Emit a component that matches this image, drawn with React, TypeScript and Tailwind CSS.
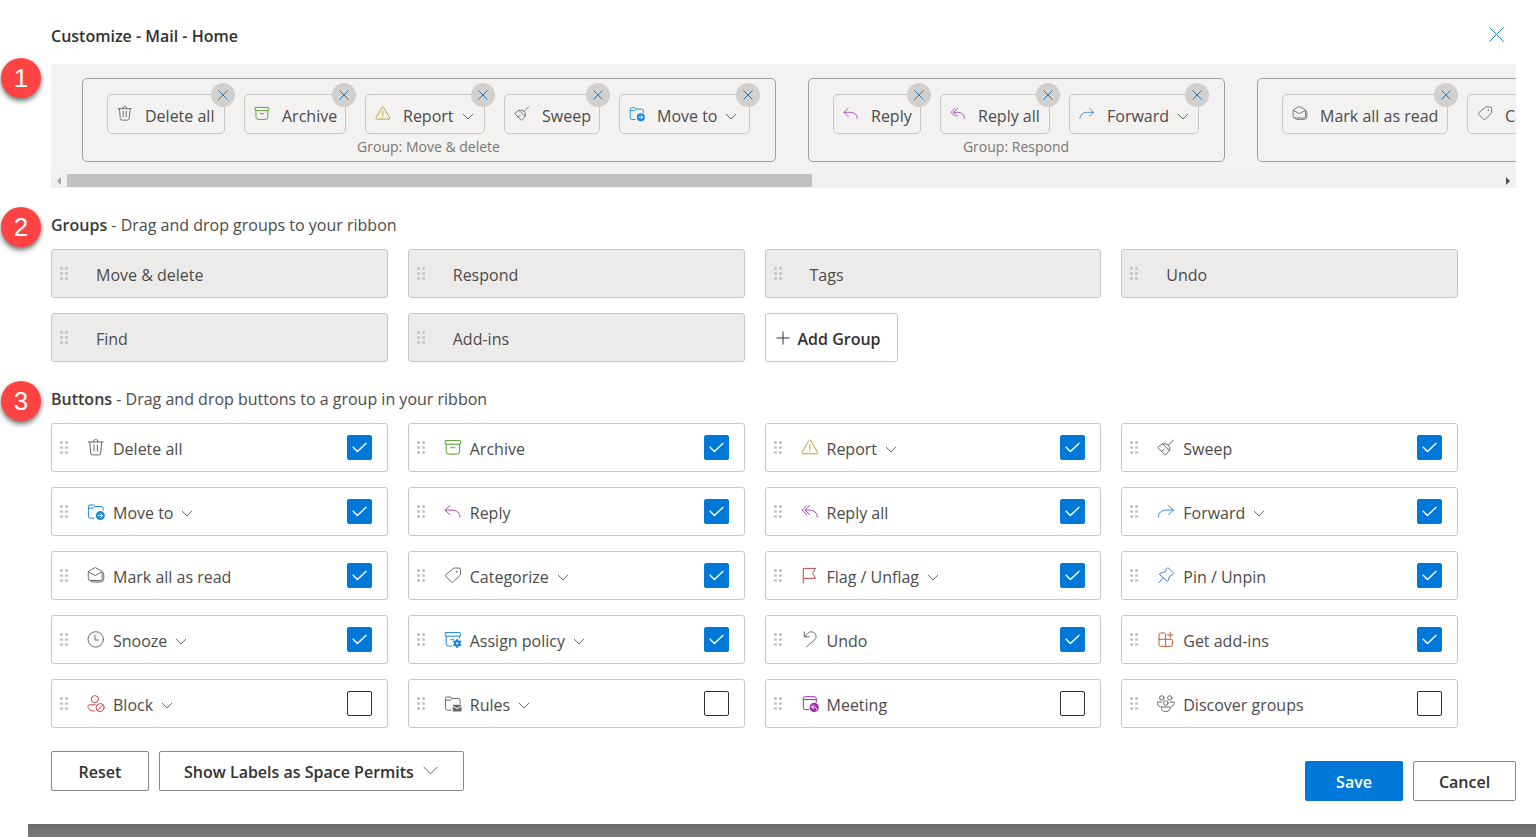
import type { ReactNode } from 'react';

/**
 * Ribbon customization dialog
 *
 * Top strip previews the ribbon, below it are the draggable groups and buttons.
 */

type Action = {
  id: string;
  label: string;
  color: string;
  icon: ReactNode;
  menu?: boolean;
  checked?: boolean;
  chip?: string;
};

const ACTIONS: Action[] = [
  {
    id: 'delete-all',
    label: 'Delete all',
    color: 'text-[#6b6966]',
    checked: true,
    chip: 'w-[118px]',
    icon: (
      <path d="M1.2 3h15M6.2 3a2.5 2.5 0 0 1 5 0M2.7 3l1 11a2 2 0 0 0 2 1.9h6a2 2 0 0 0 2-1.9l1-11M7 6v6M10.4 6v6" />
    ),
  },
  {
    id: 'archive',
    label: 'Archive',
    color: 'text-[#559a2c]',
    checked: true,
    chip: 'w-[102px]',
    icon: (
      <>
        <rect x="1.2" y="1.6" width="15.4" height="3.6" rx="0.8" />
        <path d="M2.2 5.2v7.4a2.5 2.5 0 0 0 2.5 2.5h8.4a2.5 2.5 0 0 0 2.5-2.5V5.2M6.9 8.7h4" />
      </>
    ),
  },
  {
    id: 'report',
    label: 'Report',
    color: 'text-[#c09a2c]',
    menu: true,
    checked: true,
    chip: 'w-[120px]',
    icon: (
      <>
        <path d="M8 1.5a1 1 0 0 1 1.7 0l6.8 11.8a1 1 0 0 1-.8 1.5H2a1 1 0 0 1-.9-1.5zM8.8 5.5v4.7" />
        <circle cx="8.8" cy="12.2" r="0.7" fill="currentColor" stroke="none" />
      </>
    ),
  },
  {
    id: 'sweep',
    label: 'Sweep',
    color: 'text-[#6b6966]',
    checked: true,
    chip: 'w-[96px]',
    icon: (
      <path d="M16.4 1l-5 5.2M5.6 4.9c2.3-.6 4.3 0 5.8 1.3 1.3 1.5 1.8 3.3 1.2 5.4L8.4 16.2 1 8.8zM5.6 4.9l7 6.7M4.6 12.2l2.4-1.6" />
    ),
  },
  {
    id: 'move-to',
    label: 'Move to',
    color: 'text-[#1a86d9]',
    menu: true,
    checked: true,
    chip: 'w-[131px]',
    icon: (
      <>
        <path d="M7 15.2H3.4a2 2 0 0 1-2-2V3.4a1.4 1.4 0 0 1 1.4-1.4h3.7l2 1.5h5.7a2 2 0 0 1 2 2v1.8M1.4 5.2h4.9l2.2-1.7" />
        <circle cx="13.3" cy="12.6" r="4.5" fill="currentColor" stroke="none" />
        <path d="M11 12.6h4.5M13.6 10.6l2 2-2 2" stroke="#fff" />
      </>
    ),
  },
  {
    id: 'reply',
    label: 'Reply',
    color: 'text-[#a846b9]',
    checked: true,
    chip: 'w-[88px]',
    icon: <path d="M5.7 2.6L1.2 7.1l4.5 4.5M1.2 7.1h6.5c5 0 8.3 2.6 8.3 7" />,
  },
  {
    id: 'reply-all',
    label: 'Reply all',
    color: 'text-[#a846b9]',
    checked: true,
    chip: 'w-[110px]',
    icon: <path d="M5.6 2.6L1.1 7.1l4.5 4.5M8.6 2.6L4.1 7.1l4.5 4.5M4.1 7.1h4.3c4.8 0 7.8 2.6 7.9 7" />,
  },
  {
    id: 'forward',
    label: 'Forward',
    color: 'text-[#2b88d8]',
    menu: true,
    checked: true,
    chip: 'w-[130px]',
    icon: <path d="M11.8 2.6l4.5 4.5-4.5 4.5M16.3 7.1H9.6c-5 0-8.4 2.6-8.5 7" />,
  },
  {
    id: 'mark-read',
    label: 'Mark all as read',
    color: 'text-[#6b6966]',
    checked: true,
    chip: 'w-[166px]',
    icon: (
      <>
        <path d="M1.3 5.2a1.5 1.5 0 0 1 .8-1.3L7.5.9a1.5 1.5 0 0 1 1.5 0l5.4 3a1.5 1.5 0 0 1 .8 1.3v6.4a1.9 1.9 0 0 1-1.9 1.9H3.2a1.9 1.9 0 0 1-1.9-1.9zM1.5 4.9l6.8 3.6 6.7-3.6" />
        <path d="M3.2 13.6a2.3 2.3 0 0 0 2 1.4h8a3.6 3.6 0 0 0 3.6-3.6V7.2a2.3 2.3 0 0 0-1.4-2" />
      </>
    ),
  },
  {
    id: 'categorize',
    label: 'Categorize',
    color: 'text-[#6b6966]',
    menu: true,
    checked: true,
    chip: 'w-[152px]',
    icon: (
      <>
        <path d="M9.3 1.5a1.5 1.5 0 0 1 1.1-.5l4.6.1a1.5 1.5 0 0 1 1.5 1.5v4.6a1.5 1.5 0 0 1-.5 1.1l-6.6 6.5a1.5 1.5 0 0 1-2.1 0L2 9.6a1.5 1.5 0 0 1 0-2.1z" />
        <circle cx="12.7" cy="4.6" r="0.9" fill="currentColor" stroke="none" />
      </>
    ),
  },
  {
    id: 'flag',
    label: 'Flag / Unflag',
    color: 'text-[#c4474f]',
    menu: true,
    checked: true,
    icon: <path d="M2.3 15.9V1.4h12.2l-2.8 5 2.8 5H2.3" />,
  },
  {
    id: 'pin',
    label: 'Pin / Unpin',
    color: 'text-[#2b88d8]',
    checked: true,
    icon: (
      <path d="M10 1.3a1 1 0 0 1 1.6-.2l4.6 4.6a1 1 0 0 1-.2 1.6l-3.3 1.9-1.5 4.2a.9.9 0 0 1-1.5.3L2.9 7.9a.9.9 0 0 1 .3-1.5l4.6-1.6zM6.2 11.1l-4.5 4.6" />
    ),
  },
  {
    id: 'snooze',
    label: 'Snooze',
    color: 'text-[#6b6966]',
    menu: true,
    checked: true,
    icon: (
      <>
        <circle cx="8.7" cy="8.4" r="7.7" />
        <path d="M8 4.2V9h3.6" />
      </>
    ),
  },
  {
    id: 'policy',
    label: 'Assign policy',
    color: 'text-[#1a86d9]',
    menu: true,
    checked: true,
    icon: (
      <>
        <rect x="1.2" y="1.6" width="15.4" height="3.6" rx="0.8" />
        <path d="M2.2 5.2v7.4a2.5 2.5 0 0 0 2.5 2.5h2.8M15.6 5.2v2M6.9 8.7h3" />
        <circle cx="13.2" cy="12.4" r="2.2" strokeWidth="2.2" />
        <path
          d="M13.2 8.6v1M13.2 15.2v1M9.9 10.5l.9.5M15.6 13.8l.9.5M9.9 14.3l.9-.5M15.6 11l.9-.5"
          strokeWidth="1.8"
        />
      </>
    ),
  },
  {
    id: 'undo',
    label: 'Undo',
    color: 'text-[#6b6966]',
    checked: true,
    icon: <path d="M3.3.9v4.9h5M3.5 5.6l3.2-3.2a4.7 4.7 0 0 1 7.7.8c1.2 2 .8 4.1-.8 5.6l-7.9 7" />,
  },
  {
    id: 'addins',
    label: 'Get add-ins',
    color: 'text-[#ca5a2e]',
    checked: true,
    icon: (
      <path d="M8.6 8.3V3.4a1.4 1.4 0 0 0-1.4-1.4H3.4A1.4 1.4 0 0 0 2 3.4v10.3a1.6 1.6 0 0 0 1.6 1.6h10.2a1.6 1.6 0 0 0 1.6-1.6V9.7A1.4 1.4 0 0 0 14 8.3H2M8.6 8.3v7M13.2 1.2v5.6M10.4 4H16" />
    ),
  },
  {
    id: 'block',
    label: 'Block',
    color: 'text-[#c4474f]',
    menu: true,
    icon: (
      <>
        <circle cx="7.9" cy="4.2" r="3.6" />
        <path d="M8.2 9.8H2.6A1.6 1.6 0 0 0 1 11.4c0 3 2.7 4.6 6.4 4.7" />
        <circle cx="13.1" cy="12.6" r="4" />
        <path d="M10.3 15.4l5.6-5.6" />
      </>
    ),
  },
  {
    id: 'rules',
    label: 'Rules',
    color: 'text-[#6b6966]',
    menu: true,
    icon: (
      <>
        <path d="M7 15.2H3.4a2 2 0 0 1-2-2V3.4a1.4 1.4 0 0 1 1.4-1.4h3.7l2 1.5h5.7a2 2 0 0 1 2 2v2.8M1.4 5.2h4.9l2.2-1.7" />
        <rect x="8.8" y="9.8" width="8.8" height="6.8" rx="1" fill="currentColor" stroke="none" />
        <path d="M8.8 11.2l4.4 2.3 4.4-2.3" stroke="#fff" />
      </>
    ),
  },
  {
    id: 'meeting',
    label: 'Meeting',
    color: 'text-[#9a2dac]',
    icon: (
      <>
        <path d="M7.5 14.6H4.3a2 2 0 0 1-2-2V3.7a2 2 0 0 1 2-2h9a2 2 0 0 1 2 2v3.5M2.3 4.6h13" />
        <circle cx="13.2" cy="12.4" r="4.6" fill="currentColor" stroke="none" />
        <path d="M12.6 10l-2 2 2 2M10.8 12h2.4c1.6 0 2.3.9 2.3 2.4" stroke="#fff" />
      </>
    ),
  },
  {
    id: 'discover',
    label: 'Discover groups',
    color: 'text-[#6b6966]',
    icon: (
      <>
        <circle cx="4.8" cy="2.9" r="2.2" />
        <circle cx="12.8" cy="2.9" r="2.2" />
        <circle cx="8.8" cy="8" r="2.3" />
        <path d="M4.4 12h8.8c.5 2.6-1.4 4.6-4.4 4.6S3.900 14.6 4.400 12zM4.600 7H.6c-.7 2 .3 4 2.500 4.700M13 7h4c.7 2-.3 4-2.500 4.700" />
      </>
    ),
  },
];

const RIBBON = [
  { name: 'Move & delete', items: ['delete-all', 'archive', 'report', 'sweep', 'move-to'] },
  { name: 'Respond', items: ['reply', 'reply-all', 'forward'] },
  { name: 'Tags', items: ['mark-read', 'categorize'] },
];

const GROUPS = ['Move & delete', 'Respond', 'Tags', 'Undo', 'Find', 'Add-ins'];

const ActionIcon = ({ action, className }: { action: Action; className: string }) => (
  <svg
    viewBox="0 0 18 18"
    className={`shrink-0 ${className} ${action.color}`}
    fill="none"
    stroke="currentColor"
    strokeWidth="1"
    strokeLinecap="round"
    strokeLinejoin="round"
    aria-hidden="true"
  >
    {action.icon}
  </svg>
);

const Chevron = ({ className }: { className: string }) => (
  <svg viewBox="0 0 12 7" className={`shrink-0 text-[#6b6966] ${className}`} fill="none" stroke="currentColor" aria-hidden="true">
    <path d="M1 1l5 5 5-5" />
  </svg>
);

const Cross = ({ className }: { className: string }) => (
  <svg viewBox="0 0 10 10" className={className} fill="none" stroke="currentColor" aria-hidden="true">
    <path d="M.5.5l9 9M9.5.5l-9 9" />
  </svg>
);

// Six-dot drag handle
const Grip = () => (
  <svg viewBox="0 0 10 14" className="h-[14px] w-[10px] shrink-0 text-[#c8c6c4]" fill="currentColor" aria-hidden="true">
    {[0, 5, 10].map((y) => (
      <g key={y}>
        <rect x="1" y={y} width="3" height="3" rx="1" />
        <rect x="6" y={y} width="3" height="3" rx="1" />
      </g>
    ))}
  </svg>
);

const Step = ({ n }: { n: number }) => (
  <span className="absolute -top-[6px] right-full mr-[10px] flex h-10 w-10 items-center justify-center rounded-full bg-[#ff4343] font-['Liberation_Sans',sans-serif] text-[26px] font-normal text-white shadow-[0_3px_5px_rgba(0,0,0,0.55)]">
    {n}
  </span>
);

const RibbonChip = ({ action }: { action: Action }) => (
  <div className={`relative flex h-10 shrink-0 items-center rounded-[5px] border border-[#c8c6c4] pl-[9px] ${action.chip}`}>
    <ActionIcon action={action} className="h-4 w-4" />
    <span className="ml-3 whitespace-nowrap pt-[3px]">{action.label}</span>
    {action.menu && <Chevron className="ml-2 mt-1 h-[7px] w-3" />}
    <button
      type="button"
      aria-label={`Remove ${action.label}`}
      className="absolute -right-[11px] -top-3 flex h-6 w-6 items-center justify-center rounded-full bg-[#d2d0ce]"
    >
      <Cross className="h-[10px] w-[10px] text-[#2b78b5]" />
    </button>
  </div>
);

const Ribbon = () => (
  <div className="overflow-hidden bg-[#f3f2f1]">
    <div className="flex gap-8 pb-[11px] pl-[31px] pt-[14px]">
      {RIBBON.map((group) => (
        <div key={group.name} className="h-[84px] shrink-0 rounded-[5px] border border-[#a19f9d] pl-6 pr-[25px] pt-[15px]">
          <div className="flex gap-[19px]">
            {group.items.map((id) => (
              <RibbonChip key={id} action={ACTIONS.find((a) => a.id === id)!} />
            ))}
          </div>
          {group.name !== 'Tags' && (
            <p className="pt-[3px] text-center text-[14px] leading-5 text-[#797775]">Group: {group.name}</p>
          )}
        </div>
      ))}
    </div>
    {/* Horizontal scrollbar */}
    <div className="flex h-[15px] items-center bg-[#f0f0f0]">
      <button type="button" aria-label="Scroll left" className="flex w-4 shrink-0 justify-center text-[#a3a3a3]">
        <svg viewBox="0 0 4 8" className="h-2 w-1" fill="currentColor"><path d="M4 0v8L0 4z" /></svg>
      </button>
      <div className="flex-1">
        <div className="h-[13px] w-[52%] bg-[#c1c1c1]" />
      </div>
      <button type="button" aria-label="Scroll right" className="flex w-4 shrink-0 justify-center text-[#505050]">
        <svg viewBox="0 0 4 8" className="h-2 w-1" fill="currentColor"><path d="M0 0v8l4-4z" /></svg>
      </button>
    </div>
  </div>
);

const ActionCard = ({ action }: { action: Action }) => (
  <div className="flex h-[49px] items-center rounded-[3px] border border-[#c8c6c4] pl-[7px] pr-[15px]">
    <Grip />
    <label htmlFor={action.id} className="ml-[18px] flex flex-1 items-center">
      <ActionIcon action={action} className="h-[18px] w-[18px]" />
      <span className="ml-2 pt-[3px]">{action.label}</span>
      {action.menu && <Chevron className="ml-2 mt-1 h-[7px] w-3" />}
    </label>
    <span className="grid place-items-center">
      <input
        id={action.id}
        type="checkbox"
        defaultChecked={action.checked}
        className="peer col-start-1 row-start-1 h-[25px] w-[25px] appearance-none rounded-[2px] border border-[#323130] checked:border-[#0078d7] checked:bg-[#0078d7]"
      />
      <svg
        viewBox="0 0 25 25"
        className="pointer-events-none invisible col-start-1 row-start-1 h-[25px] w-[25px] text-white peer-checked:visible"
        fill="none"
        stroke="currentColor"
        strokeWidth="1.4"
        aria-hidden="true"
      >
        <path d="M5.7 11.7l4.7 4.8 9-8.6" />
      </svg>
    </span>
  </div>
);

const SectionTitle = ({ n, title, hint }: { n: number; title: string; hint: string }) => (
  <h2 className="relative mb-3 mt-[25px] leading-6">
    <Step n={n} />
    <span className="font-semibold text-[#3b3a39]">{title}</span> - {hint}
  </h2>
);

export default function App() {
  return (
    <div className="flex min-h-screen flex-col bg-white font-['Open_Sans','Noto_Sans',sans-serif] text-[16px] text-[#4d4b49]">
      <main className="pl-[51px] pr-5">
        <header className="flex h-16 items-center justify-between pr-3 pt-1">
          <h1 className="pt-1 text-[16px] font-semibold text-[#323130]">Customize - Mail - Home</h1>
          <button type="button" aria-label="Close">
            <svg viewBox="0 0 15 15" className="h-[15px] w-[15px] text-[#1a86d9]" fill="none" stroke="currentColor" aria-hidden="true">
              <path d="M.5.5l14 14M14.5.5l-14 14" />
            </svg>
          </button>
        </header>

        <section className="relative">
          <Step n={1} />
          <Ribbon />
        </section>

        <section className="pr-[58px]">
          <SectionTitle n={2} title="Groups" hint="Drag and drop groups to your ribbon" />
          <div className="grid grid-cols-4 gap-x-5 gap-y-[15px]">
            {GROUPS.map((name) => (
              <div key={name} className="flex h-[49px] items-center rounded-[3px] border border-[#c8c6c4] bg-[#edebe9] pl-[7px]">
                <Grip />
                <span className="ml-[27px] pt-[3px]">{name}</span>
              </div>
            ))}
            <button
              type="button"
              className="flex h-[49px] items-center justify-self-start rounded-[3px] border border-[#c8c6c4] pl-[10px] pr-4 font-semibold text-[#323130]"
            >
              <svg viewBox="0 0 14 14" className="mr-2 h-[14px] w-[14px]" fill="none" stroke="currentColor" aria-hidden="true">
                <path d="M7 .5v13M.5 7h13" />
              </svg>
              <span className="pt-[3px]">Add Group</span>
            </button>
          </div>
        </section>

        <section className="pr-[58px]">
          <SectionTitle n={3} title="Buttons" hint="Drag and drop buttons to a group in your ribbon" />
          <div className="grid grid-cols-4 gap-x-5 gap-y-[15px]">
            {ACTIONS.map((action) => (
              <ActionCard key={action.id} action={action} />
            ))}
          </div>
        </section>

        <footer className="flex items-start justify-between pb-[23px] pt-[23px] font-semibold text-[#323130]">
          <div className="flex gap-[10px]">
            <button type="button" className="h-10 w-[98px] rounded-[2px] border border-[#8a8886] pt-[2px]">
              Reset
            </button>
            <div className="relative">
              <select
                aria-label="Label display"
                className="h-10 w-[305px] appearance-none rounded-[2px] border border-[#8a8886] pl-6 pt-[2px]"
              >
                <option>Show Labels as Space Permits</option>
              </select>
              <svg
                viewBox="0 0 15 9"
                className="pointer-events-none absolute right-[26px] top-[15px] h-[9px] w-[15px] text-[#605e5c]"
                fill="none"
                stroke="currentColor"
                aria-hidden="true"
              >
                <path d="M.7 1l6.800 6.800L14.300 1" />
              </svg>
            </div>
          </div>
          <div className="flex gap-[10px] pt-[10px]">
            <button type="button" className="h-10 w-[98px] rounded-[2px] bg-[#0078d7] pt-[2px] text-white">
              Save
            </button>
            <button type="button" className="h-10 w-[103px] rounded-[2px] border border-[#8a8886] pt-[2px]">
              Cancel
            </button>
          </div>
        </footer>
      </main>

      {/* Dimmed page showing under the dialog */}
      <div className="ml-7 flex-1 bg-linear-to-b from-[#6a6a69] to-[#7b7b7a]" />
    </div>
  );
}
